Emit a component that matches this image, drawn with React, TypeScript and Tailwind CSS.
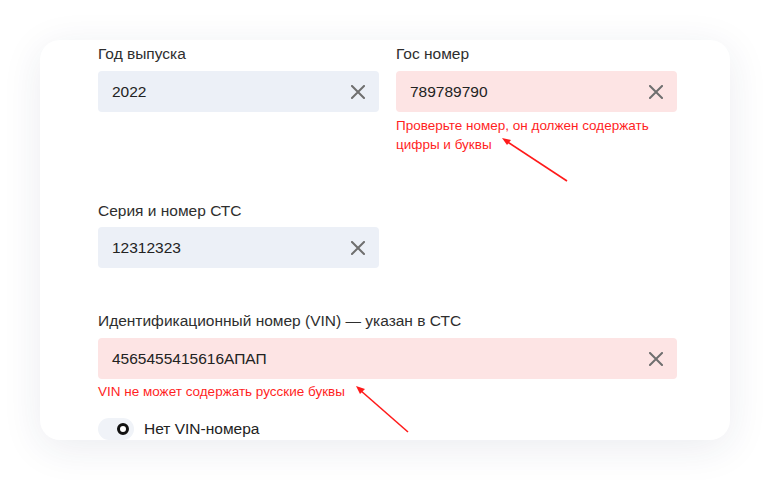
import React from 'react';

const ClearIcon: React.FC = () => (
  <svg width="14" height="14" viewBox="0 0 14 14" className="shrink-0">
    <path d="M1 1L13 13M13 1L1 13" stroke="#6f6f6f" strokeWidth="2" strokeLinecap="square" />
  </svg>
);

const Field: React.FC<{ label: string; value: string; error?: boolean; labelGap?: string }> = ({
  label,
  value,
  error,
  labelGap = 'mb-2',
}) => (
  <div className="flex flex-col">
    <div className={`text-[15.5px] leading-[18px] text-[#2e2e2e] ${labelGap}`}>{label}</div>
    <div
      className={`flex h-[41px] items-center justify-between rounded-[4px] pl-[14px] pr-[14px] ${
        error ? 'bg-[#fde4e4]' : 'bg-[#ecf0f7]'
      }`}
    >
      <span className="text-[15.5px] text-[#222]">{value}</span>
      <ClearIcon />
    </div>
  </div>
);

const App: React.FC = () => {
  return (
    <div className="relative h-[480px] w-[770px] bg-white" style={{ fontFamily: '"Liberation Sans", Arial, sans-serif' }}>
      <div className="ml-[40px] pt-[40px]">
        <div className="h-[400px] w-[690px] overflow-hidden rounded-[20px] bg-white pl-[58px] pt-[5px] shadow-[0_8px_40px_rgba(30,40,90,0.09)]">
          <div className="grid w-[579px] grid-cols-2 gap-x-[17px]">
            <Field label="Год выпуска" value="2022" />
            <div className="flex flex-col">
              <Field label="Гос номер" value="789789790" error />
              <div className="mt-[4px] text-[13.5px] leading-[19px] text-[#ff1f1f]">
                Проверьте номер, он должен содержать
                <br />
                цифры и буквы
              </div>
            </div>
          </div>

          <div className="mt-[48px] w-[281px]">
            <Field label="Серия и номер СТС" value="12312323" labelGap="mb-[7px]" />
          </div>

          <div className="mt-[44px] w-[579px]">
            <Field label="Идентификационный номер (VIN) — указан в СТС" value="4565455415616АПАП" error labelGap="mb-[8px]" />
            <div className="mt-[3px] text-[13.5px] leading-[19px] text-[#ff1f1f]">VIN не может содержать русские буквы</div>
          </div>

          <div className="mt-[16px] flex items-center gap-[10px]">
            <div className="flex h-[22px] w-[36px] items-center justify-end rounded-full bg-[#f0f3f8] pr-[5px]">
              <div className="h-[12px] w-[12px] rounded-full border-[3px] border-[#111] bg-white" />
            </div>
            <span className="text-[15.5px] text-[#222]">Нет VIN-номера</span>
          </div>
        </div>
      </div>

      <svg className="pointer-events-none absolute left-0 top-0" width="770" height="480" viewBox="0 0 770 480">
        <line x1="567" y1="181" x2="506" y2="141" stroke="#ff1a1a" strokeWidth="1.6" />
        <polygon points="502,138 511,140 507,145" fill="#ff1a1a" />
        <line x1="408" y1="432" x2="360" y2="390" stroke="#ff1a1a" strokeWidth="1.6" />
        <polygon points="356,386 365,389 360,394" fill="#ff1a1a" />
      </svg>
    </div>
  );
};

export default App;
